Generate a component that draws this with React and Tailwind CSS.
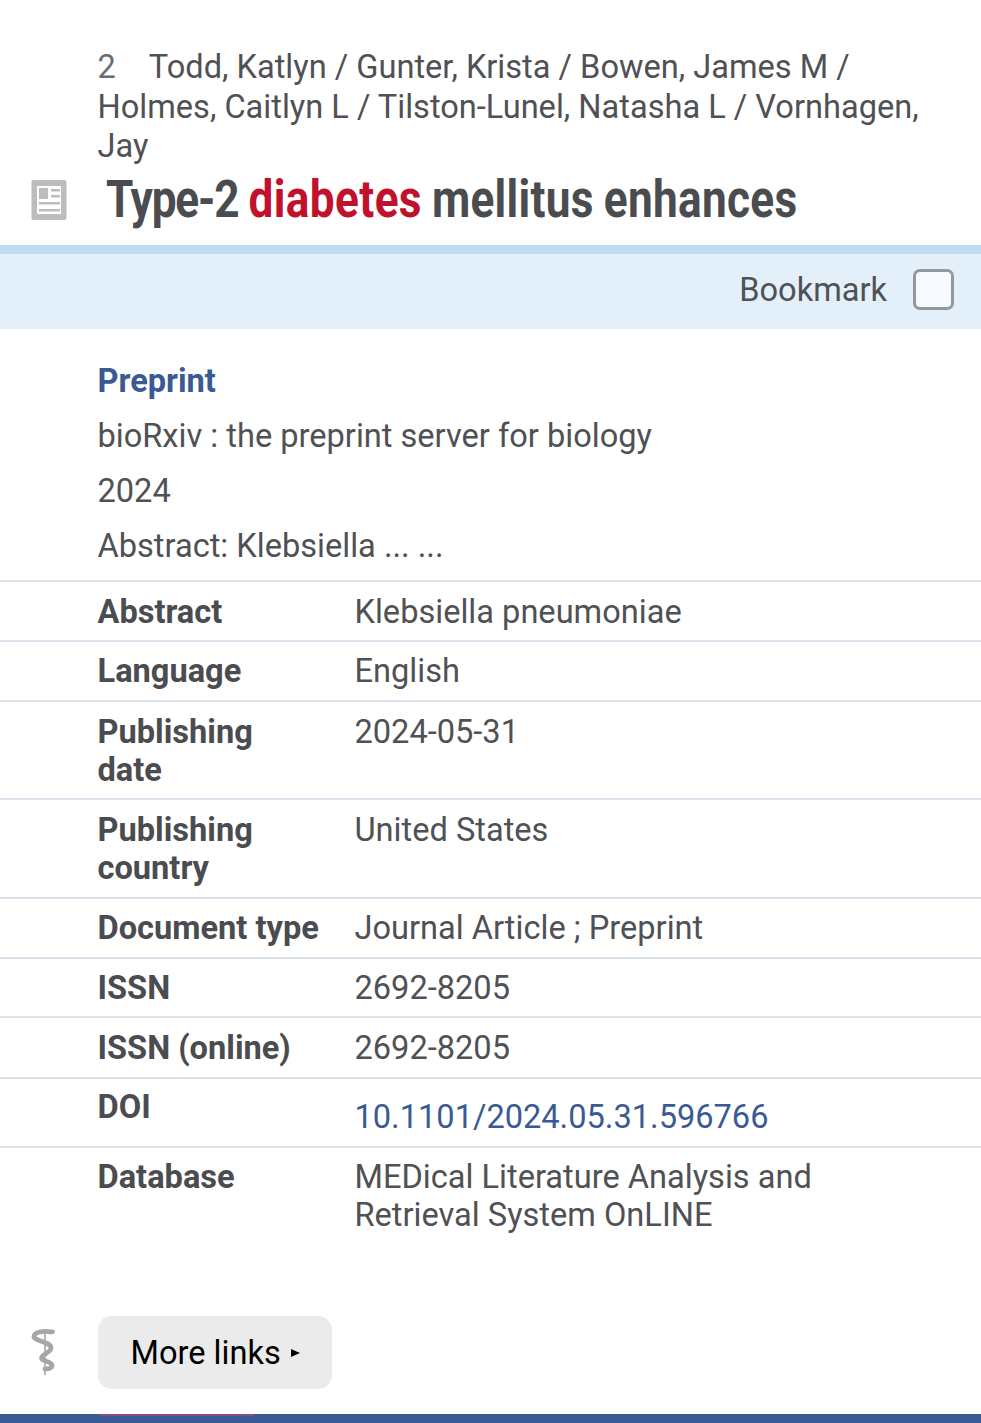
const rows = [
  ["Abstract", "Klebsiella pneumoniae", "h-[60px] pt-[11px]"],
  ["Language", "English", "h-[60px] pt-[10px]"],
  ["Publishing date", "2024-05-31", "h-[98px] pt-[11px]"],
  ["Publishing country", "United States", "h-[99px] pt-[11px]"],
  ["Document type", "Journal Article ; Preprint", "h-[60px] pt-[10px]"],
  ["ISSN", "2692-8205", "h-[59px] pt-[10px]"],
  ["ISSN (online)", "2692-8205", "h-[61px] pt-[11px]"],
];

function Row({ label, value, h }) {
  return (
    <div className={`flex border-t-2 border-[#d8e2ec] pl-[97.5px] leading-[38px] ${h}`}>
      <div className="w-[257px] pr-[32px] font-bold text-[#4a4c4f]">{label}</div>
      <div className="flex-1">{value}</div>
    </div>
  );
}

export default function App() {
  return (
    <div className="relative h-[1423px] overflow-hidden bg-white font-['Roboto',sans-serif] text-[32.6px] leading-[38.5px] text-[#4f5154]">
      <div className="pl-[97.5px] pr-[50px] pt-[48px] leading-[39.5px]">
        <span className="mr-[33px] text-[#6b6d70]">2</span>
        Todd, Katlyn / Gunter, Krista / Bowen, James M / Holmes, Caitlyn L / Tilston-Lunel, Natasha L / Vornhagen, Jay
      </div>

      <div className="flex h-[78.5px] items-start">
        <div className="ml-[31px] mt-[13.5px] w-[75px]">
          <svg width="36" height="40" viewBox="0 0 36 40">
            <rect x="0.5" y="0" width="35" height="40" rx="2" fill="#bdbdbd" />
            <rect x="6" y="6" width="24" height="28" fill="#fff" />
            <rect x="8" y="8" width="9" height="11" fill="#bdbdbd" />
            <rect x="20" y="9" width="9" height="2.5" fill="#bdbdbd" />
            <rect x="20" y="15" width="9" height="2.5" fill="#bdbdbd" />
            <rect x="8" y="22" width="21" height="2.5" fill="#bdbdbd" />
            <rect x="8" y="29" width="21" height="2.5" fill="#bdbdbd" />
          </svg>
        </div>
        <h1 className="mt-[7px] origin-left scale-x-[0.866] whitespace-nowrap text-[51px] font-bold leading-[52px] tracking-[0.34px] text-[#4a4c4f] [word-spacing:-1.5px]">
          <span className="tracking-[-1.3px]">Type-2</span> <span className="tracking-[0.43px] text-[#c0122c]">diabetes</span> mellitus enhances
        </h1>
      </div>

      <div className="flex h-[84px] items-center justify-end border-t-[9px] border-[#bddcf3] bg-[#e3eff9] pb-[5px] pr-[27px]">
        <span className="mr-[26px] mt-[3px]">Bookmark</span>
        <div className="h-[41px] w-[41px] rounded-[7px] border-[3px] border-[#93989c] bg-[#f6fafe]" />
      </div>

      <div className="pl-[97.5px] pt-[33px]">
        <div className="font-bold leading-[38px] text-[#3a5a94]">Preprint</div>
        <div className="mt-[17px]">bioRxiv : the preprint server for biology</div>
        <div className="mt-[16.5px]">2024</div>
        <div className="mt-[16.5px]">Abstract: Klebsiella ... ...</div>
      </div>

      <div className="mt-[14px]">
        {rows.map(([label, value, h]) => (
          <Row key={label} label={label} value={value} h={h} />
        ))}
        <div className="flex h-[69px] border-t-2 border-[#d8e2ec] pl-[97.5px] pt-[9.5px] leading-[38px]">
          <div className="w-[257px] font-bold text-[#4a4c4f]">DOI</div>
          <div className="pt-[10px] text-[#3a5a94]">10.1101/2024.05.31.596766</div>
        </div>
        <div className="flex border-t-2 border-[#d8e2ec] pl-[97.5px] pt-[10px] leading-[38px]">
          <div className="w-[257px] font-bold text-[#4a4c4f]">Database</div>
          <div className="flex-1 pr-[100px]">MEDical Literature Analysis and Retrieval System OnLINE</div>
        </div>
      </div>

      <div className="mt-[82px] flex items-center">
        <div className="ml-[31px] w-[67px]">
          <svg width="26" height="48" viewBox="0 0 26 48" fill="none" stroke="#a6a6a6">
            <path d="M14 2V47" strokeWidth="1.6" />
            <path d="M20 4C13 2.5 3 4 3 8.5c0 4.5 16 5 17 11 .8 5-9 6-9.5 10.5-.4 3.5 10.5 3 10.5 7.5 0 2.5-4 3.5-7 3.5" strokeWidth="4.8" strokeLinecap="round" />
            <ellipse cx="20.5" cy="3.8" rx="3.5" ry="2.3" fill="#a6a6a6" stroke="none" />
          </svg>
        </div>
        <div className="flex h-[73px] w-[234px] items-center rounded-[14px] bg-[#ebebeb] pl-[32.5px] pt-[2px] text-black">
          More links
          <span className="ml-[10px] inline-block h-0 w-0 border-y-[4.5px] border-l-[9px] border-y-transparent border-l-black" />
        </div>
      </div>

      <div className="absolute bottom-0 left-0 right-0 h-[9px] bg-[#3a5a94]">
        <div className="ml-[100px] h-[2px] w-[154px] bg-[#8a4a8c]" />
      </div>
    </div>
  );
}
